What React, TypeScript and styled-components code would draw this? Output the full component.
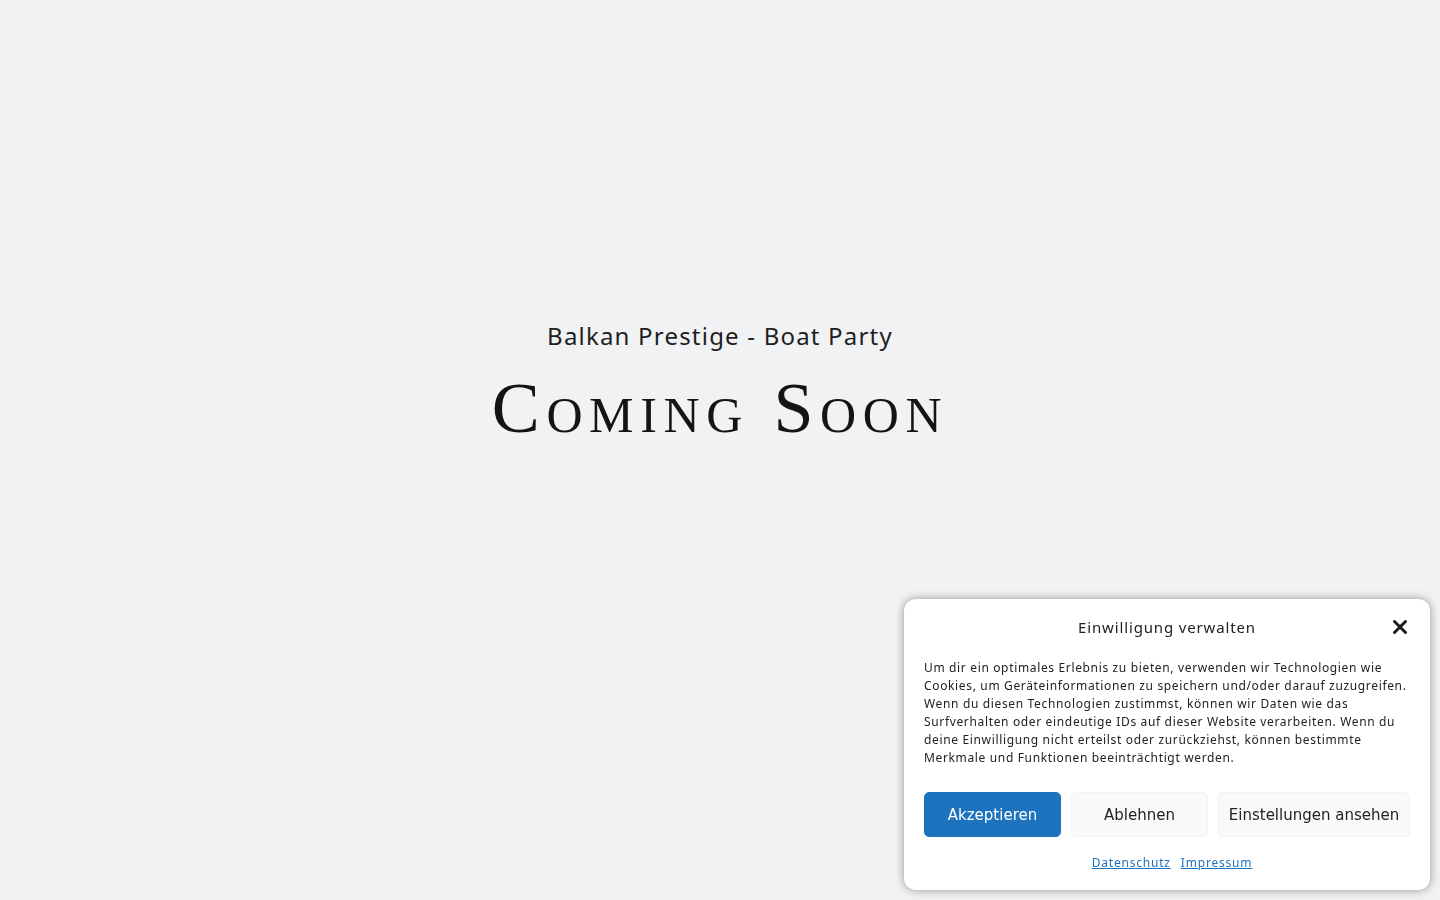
import React from 'react'
import styled, { createGlobalStyle } from 'styled-components'

const GlobalStyle = createGlobalStyle`
  html, body {
    margin: 0;
    padding: 0;
    background: #f1f2f4;
  }
  #root {
    min-height: 100vh;
  }
`

const Page = styled.main`
  min-height: 100vh;
  display: flex;
  flex-direction: column;
  align-items: center;
  padding-top: 318px;
  box-sizing: border-box;
`

const Tagline = styled.h2`
  margin: 0;
  font-family: 'Noto Sans', sans-serif;
  font-weight: 400;
  font-size: 24px;
  line-height: 36px;
  letter-spacing: 1.2px;
  color: #1f1f1f;
`

const Headline = styled.h1`
  margin: 9px 0 0;
  font-family: 'Liberation Serif', serif;
  font-weight: 400;
  font-size: 72px;
  line-height: 90px;
  font-variant: small-caps;
  letter-spacing: 6.6px;
  color: #141414;
`

const Banner = styled.aside`
  position: fixed;
  right: 10px;
  bottom: 10px;
  width: 526px;
  box-sizing: border-box;
  padding: 14px 20px 19px;
  background: #ffffff;
  border-radius: 12px;
  box-shadow: 0 0 10px rgba(0, 0, 0, 0.4);
  display: flex;
  flex-direction: column;
`

const BannerHeader = styled.div`
  position: relative;
  display: flex;
  justify-content: center;
  align-items: center;
  height: 28px;
`

const BannerTitle = styled.h3`
  margin: 0;
  font-family: 'Noto Sans', sans-serif;
  font-weight: 400;
  font-size: 15px;
  letter-spacing: 0.85px;
  color: #222;
`

const CloseButton = styled.button`
  position: absolute;
  right: 0;
  top: 4px;
  width: 20px;
  height: 20px;
  padding: 0;
  border: 0;
  background: none;
  cursor: pointer;
  display: flex;
  align-items: center;
  justify-content: center;
`

const Message = styled.p`
  margin: 18px 0 0;
  font-family: 'Noto Sans', sans-serif;
  font-size: 12px;
  line-height: 18px;
  letter-spacing: 0.65px;
  color: #222;
`

const Buttons = styled.div`
  display: flex;
  gap: 10px;
  margin-top: 25px;
`

const Btn = styled.button<{ $primary?: boolean; $wide?: boolean }>`
  flex: ${(p) => (p.$wide ? '0 0 192px' : '0 0 137px')};
  height: 45px;
  border-radius: 5px;
  font-family: 'DejaVu Sans', sans-serif;
  font-size: 15px;
  cursor: pointer;
  background: ${(p) => (p.$primary ? '#1e73be' : '#f9f9f9')};
  color: ${(p) => (p.$primary ? '#ffffff' : '#222222')};
  border: 1px solid ${(p) => (p.$primary ? '#1e73be' : '#f2f2f2')};
`

const Links = styled.nav`
  display: flex;
  justify-content: center;
  gap: 10px;
  margin-top: 17px;
  padding-left: 10px;
`

const DocLink = styled.a`
  font-family: 'Noto Sans', sans-serif;
  font-size: 12px;
  letter-spacing: 0.8px;
  color: #1e73be;
  text-decoration: underline;
`

const App: React.FC = () => {
  return (
    <>
      <GlobalStyle />
      <Page>
        <Tagline>Balkan Prestige - Boat Party</Tagline>
        <Headline>Coming Soon</Headline>
      </Page>
      <Banner>
        <BannerHeader>
          <BannerTitle>Einwilligung verwalten</BannerTitle>
          <CloseButton aria-label="Schließen">
            <svg width="16" height="16" viewBox="0 0 16 16">
              <path d="M2.5 2.5 L13.5 13.5 M13.5 2.5 L2.5 13.5" stroke="#1a1a1a" strokeWidth="3" strokeLinecap="round" />
            </svg>
          </CloseButton>
        </BannerHeader>
        <Message>
          Um dir ein optimales Erlebnis zu bieten, verwenden wir Technologien wie Cookies, um
          Geräteinformationen zu speichern und/oder darauf zuzugreifen. Wenn du diesen Technologien
          zustimmst, können wir Daten wie das Surfverhalten oder eindeutige IDs auf dieser Website
          verarbeiten. Wenn du deine Einwilligung nicht erteilst oder zurückziehst, können bestimmte
          Merkmale und Funktionen beeinträchtigt werden.
        </Message>
        <Buttons>
          <Btn $primary>Akzeptieren</Btn>
          <Btn>Ablehnen</Btn>
          <Btn $wide>Einstellungen ansehen</Btn>
        </Buttons>
        <Links>
          <DocLink href="#">Datenschutz</DocLink>
          <DocLink href="#">Impressum</DocLink>
        </Links>
      </Banner>
    </>
  )
}

export default App
